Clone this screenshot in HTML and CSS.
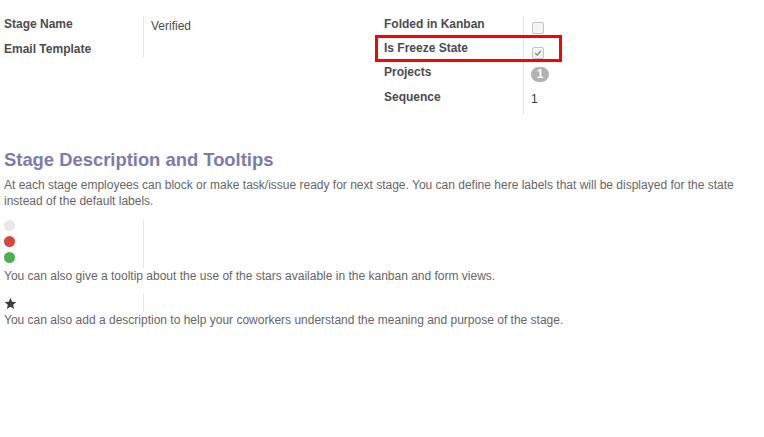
FILE: index.html
```html
<!DOCTYPE html>
<html>
<head>
<meta charset="utf-8">
<link rel="stylesheet" href="styles.css">
</head>
<body>
<div class="page">
  <div class="groups">
    <div class="group group-left">
      <div class="row l1"><div class="label">Stage Name</div><div class="value"><span class="text">Verified</span></div></div>
      <div class="row l2"><div class="label">Email Template</div><div class="value"></div></div>
    </div>
    <div class="group group-right">
      <div class="row r1"><div class="label">Folded in Kanban</div><div class="value"><span class="checkbox"></span></div></div>
      <div class="row r2 highlight"><div class="label">Is Freeze State</div><div class="value"><span class="checkbox checked"><svg viewBox="0 0 10 10" width="8" height="8"><path d="M1.5 5.2 L4 7.5 L8.5 2.5" fill="none" stroke="#8a8a8a" stroke-width="1.8"/></svg></span></div></div>
      <div class="row r3"><div class="label">Projects</div><div class="value"><span class="badge">1</span></div></div>
      <div class="row r4"><div class="label">Sequence</div><div class="value"><span class="num">1</span></div></div>
    </div>
  </div>

  <h2 class="title">Stage Description and Tooltips</h2>
  <p class="desc">At each stage employees can block or make task/issue ready for next stage. You can define here labels that will be displayed for the state instead of the default labels.</p>

  <div class="states">
    <div class="icons">
      <span class="dot grey"></span>
      <span class="dot red"></span>
      <span class="dot green"></span>
    </div>
    <div class="sep"></div>
  </div>
  <p class="note">You can also give a tooltip about the use of the stars available in the kanban and form views.</p>

  <div class="states star-row">
    <div class="icons">
      <svg class="star" viewBox="0 0 24 24" width="13" height="13"><path d="M12 1.5 L15 8.6 L22.8 9.3 L16.9 14.4 L18.7 22 L12 18 L5.3 22 L7.1 14.4 L1.2 9.3 L9 8.6 Z" fill="#3d3d3d"/></svg>
    </div>
    <div class="sep"></div>
  </div>
  <p class="note">You can also add a description to help your coworkers understand the meaning and purpose of the stage.</p>
</div>
</body>
</html>
```
FILE: styles.css
```css
html, body {
  margin: 0;
  padding: 0;
  background: #ffffff;
}
body {
  font-family: "Liberation Sans", Arial, sans-serif;
  font-size: 12px;
  line-height: 15px;
  color: #4c4c4c;
}
.page {
  padding: 16px 4px 0 4px;
}
.groups {
  display: flex;
}
.group {
  display: flex;
  flex-direction: column;
}
.group-left {
  width: 380px;
}
.row {
  display: flex;
}
.label {
  width: 139px;
  font-weight: bold;
  color: #4c4c4c;
  padding-top: 1px;
  box-sizing: border-box;
}
.value {
  border-left: 1px solid #e6e6e6;
  padding-left: 7px;
  box-sizing: border-box;
}
.l1 { height: 25px; }
.l1 .value { padding-top: 3px; }
.l2 { height: 16px; }
.text { color: #4c4c4c; }
.checkbox {
  display: flex;
  align-items: center;
  justify-content: center;
  width: 10px;
  height: 10px;
  border: 1px solid #c4c4c4;
  border-radius: 2px;
  background: #f4f4f4;
  margin-left: 1px;
}
.r1 { height: 24px; }
.r1 .value { padding-top: 6px; }
.r2 { height: 24px; position: relative; }
.r2 .value { padding-top: 7px; }
.highlight::after {
  content: "";
  position: absolute;
  left: -9px;
  top: -5px;
  width: 181px;
  height: 21px;
  border: 3px solid #ff0000;
}
.r3 { height: 25px; }
.r3 .value { padding-top: 3px; }
.badge {
  display: inline-flex;
  align-items: center;
  justify-content: center;
  width: 18px;
  height: 15px;
  border-radius: 8px;
  background: #b2b2b2;
  color: #ffffff;
  font-size: 12px;
  font-weight: bold;
}
.r4 { height: 26px; }
.r4 .label { padding-top: 1px; }
.r4 .value { padding-top: 3px; }
.num { color: #333355; }
.title {
  margin: 34px 0 0 0;
  font-size: 18.4px;
  font-weight: bold;
  color: #7c7bad;
  line-height: 22px;
}
.desc {
  margin: 6px 0 0 0;
  line-height: 16px;
  color: #666666;
  width: 740px;
}
.states {
  display: flex;
  margin-top: 10px;
}
.icons {
  width: 139px;
  display: flex;
  flex-direction: column;
  gap: 5px;
  padding-top: 1px;
}
.dot {
  display: block;
  width: 11px;
  height: 11px;
  border-radius: 50%;
}
.dot.grey { background: #e8e8e8; }
.dot.red { background: #d9443f; }
.dot.green { background: #4cae4c; }
.sep {
  width: 1px;
  background: #e6e6e6;
  height: 49px;
}
.note {
  margin: 0;
  line-height: 16px;
  color: #666666;
}
.star-row { margin-top: 9px; }
.star-row .sep { height: 19px; }
.star-row .icons { padding-top: 4px; }
.star { display: block; }
```
